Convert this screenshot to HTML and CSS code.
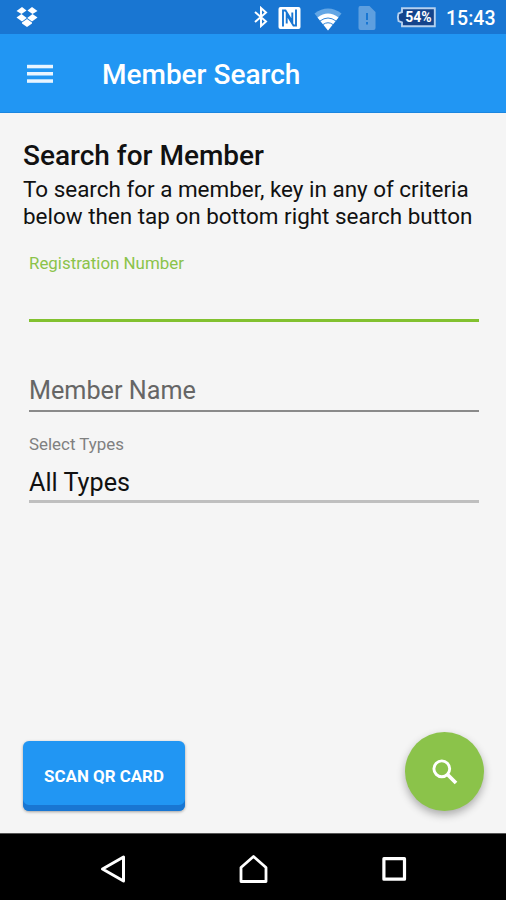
FILE: index.html
```html
<!DOCTYPE html>
<html lang="en">
<head>
    <meta charset="UTF-8">
    <meta name="viewport" content="width=device-width, initial-scale=1.0">
    <title>Member Search</title>
    <link rel="stylesheet" href="styles.css">
</head>
<body>

    <!-- Status Bar -->
    <div class="status-bar">
        <svg class="dropbox" width="22" height="20" viewBox="0 0 22 20" fill="#fff">
            <path d="M6 0L10.500 3.500L5.500 7L0.500 4Z"/>
            <path d="M16 0L21.500 4L16.500 7L11.500 3.500Z"/>
            <path d="M5.500 7L10.800 11L6 14.500L0.500 10.500Z"/>
            <path d="M16.500 7L21.500 10.500L16 14.500L11.200 11Z"/>
            <path d="M11 12L16 15.600V16.500L11 20L6 16.500V15.600Z"/>
        </svg>
        <div class="status-icons">
            <svg width="14" height="22" viewBox="0 0 14 22" fill="none" stroke="#fff" stroke-width="2">
                <path d="M1 6L12 15.500L7 20V2L12 6.500L1 16"/>
            </svg>
            <svg class="nfc" width="23" height="22" viewBox="0 0 23 22">
                <rect x="0.500" y="0" width="22" height="22" rx="2" fill="#fff"/>
                <path d="M5 19.500V3.500H7.500L14.300 14.500V5.500M18 2.500V18.500H15.500L8.700 7.500V16.500" fill="none" stroke="#1976d2" stroke-width="1.900"/>
            </svg>
            <svg class="wifi" width="28" height="23" viewBox="0 0 28 23">
                <path d="M0.500 5.500Q14 -4.500 27.500 5.500L14 22.500Z" fill="#63a6e5"/>
                <path d="M3.500 9.500Q14 1.500 24.500 9.500L14 22.500Z" fill="#fff"/>
                <path d="M6 13Q14 7 22 13M9 16.500Q14 13 19 16.500" fill="none" stroke="#1976d2" stroke-width="0.900"/>
            </svg>
            <svg class="sim" width="18" height="24" viewBox="0 0 18 24">
                <path d="M2 0H11.500L17.500 6V22Q17.500 24 15.500 24H2.500Q0.500 24 0.500 22V2Q0.500 0 2 0Z" fill="#5e9fdf"/>
                <path d="M9 7V14M9 16V18.500" stroke="#1976d2" stroke-width="2"/>
            </svg>
            <div class="battery">
                <svg width="40" height="21" viewBox="0 0 40 21">
                    <path d="M6 1.200H38.800V19.300H6V15.500L2.500 14Q1.200 10.200 2.500 6.500L6 5Z" fill="#14448c" stroke="#b5d1ef" stroke-width="1.900"/>
                </svg>
                <span>54%</span>
            </div>
            <span class="clock">15:43</span>
        </div>
    </div>

    <!-- Toolbar -->
    <header class="toolbar">
        <svg width="26" height="20" viewBox="0 0 26 20" fill="#e9f5ff">
            <rect y="0.800" width="26" height="3.500"/>
            <rect y="8" width="26" height="3.500"/>
            <rect y="15.300" width="26" height="3.500"/>
        </svg>
        <h1>Member Search</h1>
    </header>

    <!-- Search Form -->
    <main class="content">
        <h2>Search for Member</h2>
        <p class="intro">To search for a member, key in any of criteria<br>below then tap on bottom right search button</p>

        <div class="field active">
            <label>Registration Number</label>
        </div>
        <div class="field name">
            <span class="text">Member Name</span>
        </div>
        <div class="field types">
            <label>Select Types</label>
            <span class="text">All Types</span>
        </div>

        <div class="actions">
            <button class="scan-btn">SCAN QR CARD</button>
            <button class="search-btn" aria-label="Search">
                <svg width="26" height="26" viewBox="0 0 26 26" fill="none" stroke="#fff">
                    <circle cx="9.800" cy="9.800" r="7.900" stroke-width="2.900"/>
                    <path d="M15.500 15.500L24 24" stroke-width="3.700"/>
                </svg>
            </button>
        </div>
    </main>

    <!-- Navigation Bar -->
    <nav class="nav-bar">
        <svg width="26" height="30" viewBox="0 0 26 30" fill="none" stroke="#fff" stroke-width="3" stroke-linejoin="round">
            <path d="M23.500 3V27L2.500 15Z"/>
        </svg>
        <svg width="30" height="30" viewBox="0 0 30 30" fill="none" stroke="#fff" stroke-width="2.800" stroke-linejoin="round">
            <path d="M2 27.500V13.500L14.500 2.500L27 13.500V27.500Z"/>
        </svg>
        <svg width="26" height="26" viewBox="0 0 26 26" fill="none" stroke="#fff" stroke-width="3.200" stroke-linejoin="round">
            <rect x="2.900" y="2.700" width="20.600" height="20.500"/>
        </svg>
    </nav>

</body>
</html>
```
FILE: styles.css
```css
* {
    box-sizing: border-box;
}

body {
    margin: 0;
    height: 900px;
    display: flex;
    flex-direction: column;
    background-color: #f5f5f5;
    color: #111;
    font-family: Roboto, sans-serif;
    overflow: hidden;
}

svg {
    display: block;
    flex-shrink: 0;
}

/* Status Bar */
.status-bar {
    height: 34px;
    padding: 0 11px 0 16px;
    display: flex;
    align-items: center;
    justify-content: space-between;
    background-color: #1976d2;
}

.status-icons {
    display: flex;
    align-items: center;
    color: #fff;
}

.nfc {
    margin: 1px 0 0 10px;
}

.wifi {
    margin: 4px 0 0 13px;
}

.sim {
    margin: 2px 0 0 16px;
}

.battery {
    display: grid;
    align-items: center;
    margin-left: 20px;
}

.battery svg,
.battery span {
    grid-area: 1 / 1;
}

.battery span {
    padding-left: 5px;
    text-align: center;
    font-size: 14px;
    font-weight: 700;
    line-height: 20px;
}

.clock {
    width: 49px;
    margin: 3px 0 0 10px;
    font-size: 19.5px;
    font-weight: 500;
    line-height: 24px;
}

/* Toolbar */
.toolbar {
    height: 79px;
    padding: 1px 0 0 27px;
    display: flex;
    align-items: center;
    gap: 49px;
    background-color: #2196f3;
    border-bottom: 1px solid #1b86e0;
}

.toolbar h1 {
    margin: 0;
    padding-top: 2px;
    color: #fff;
    font-size: 28px;
    font-weight: 500;
    line-height: 34px;
}

/* Search Form */
.content {
    flex: 1;
    display: flex;
    flex-direction: column;
    padding: 27px 22px 22px 23px;
}

.content h2 {
    margin: 0;
    font-size: 28px;
    font-weight: 500;
    line-height: 32px;
}

.intro {
    margin: 4px 0 0;
    font-size: 22.45px;
    line-height: 27px;
    white-space: nowrap;
}

.field {
    display: flex;
    flex-direction: column;
    margin: 0 5px 0 6px;
    border-bottom: 2px solid #8a8a8a;
}

.field label {
    font-size: 16.9px;
    line-height: 22px;
    color: #808080;
}

.field .text {
    font-size: 25.2px;
    line-height: 34px;
}

.field.active {
    height: 70px;
    margin-top: 22px;
    border-bottom: 3px solid #82c12f;
}

.field.active label {
    color: #8bc34a;
}

.field.name {
    height: 38px;
    margin-top: 52px;
    color: #666;
}

.field.types {
    height: 70px;
    margin-top: 21px;
    border-bottom: 3px solid #bfbfbf;
}

.field.types .text {
    margin-top: 11px;
}

/* Buttons */
.actions {
    margin-top: auto;
    display: flex;
    justify-content: space-between;
    align-items: flex-end;
}

button {
    border: none;
    padding: 0;
    color: #fff;
    font-family: inherit;
}

.scan-btn {
    width: 162px;
    height: 70px;
    border-radius: 6px;
    background-color: #2196f3;
    box-shadow: inset 0 -6px 0 #1976d2, 0 1px 3px rgba(0, 0, 0, 0.35);
    font-size: 16.9px;
    font-weight: 700;
}

.search-btn {
    width: 79px;
    height: 79px;
    display: flex;
    align-items: center;
    justify-content: center;
    border-radius: 50%;
    background-color: #8bc34a;
    box-shadow: 0 4px 9px rgba(0, 0, 0, 0.3);
}

/* Navigation Bar */
.nav-bar {
    height: 67px;
    padding: 4px 99px 0 100px;
    display: flex;
    align-items: center;
    justify-content: space-between;
    border-top: 1px solid #555;
    background-color: #000;
}
```
